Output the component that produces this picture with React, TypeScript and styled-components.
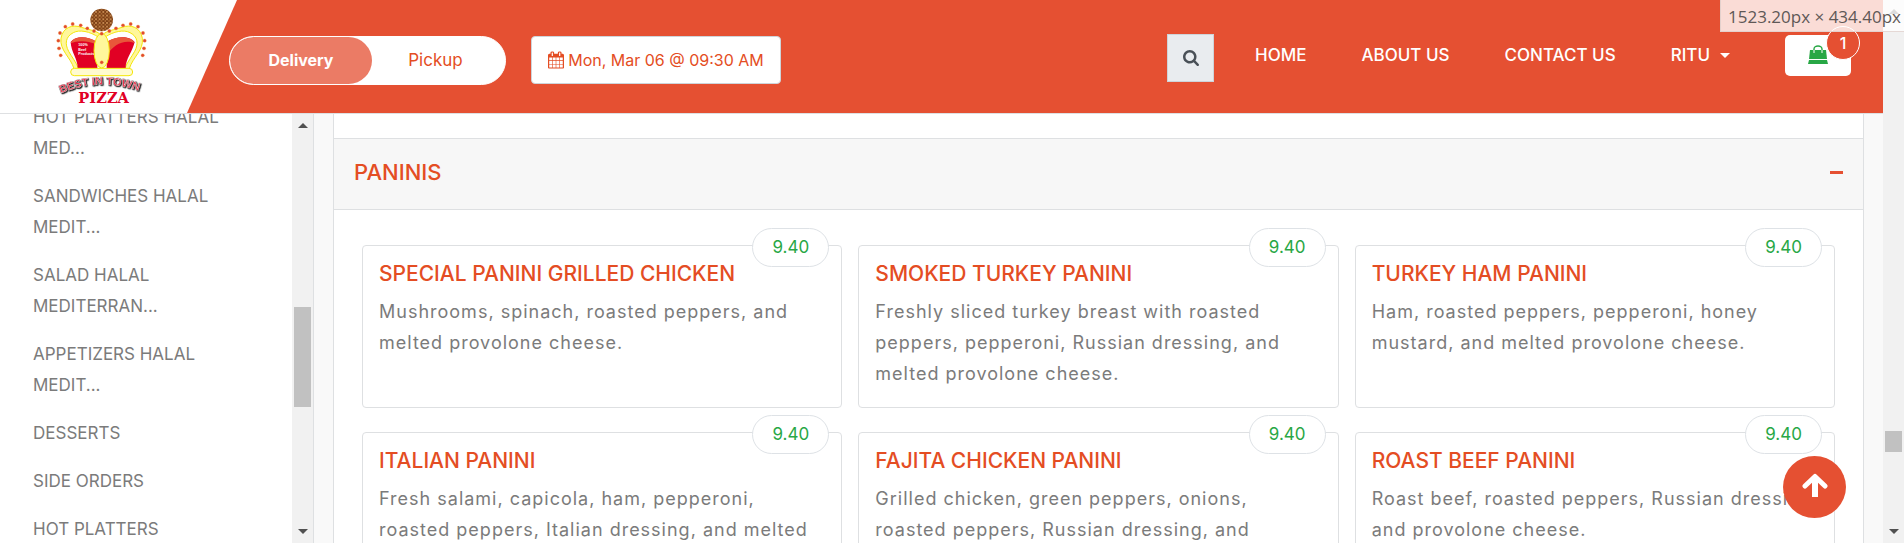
import React from "react";
import styled, { createGlobalStyle } from "styled-components";

const colors = {
  brand: "#e55032",
  brandText: "#e44d23",
  line: "#dee0e2",
  muted: "#7b7b7b",
  green: "#28a745",
};

const GlobalStyle = createGlobalStyle`
  *, *::before, *::after { box-sizing: border-box; }
  body {
    margin: 0;
    font-family: Inter, "Liberation Sans", sans-serif;
    color: ${colors.muted};
    background: #f9f9f9;
  }
  button { font-family: inherit; cursor: pointer; }
  h2, h3, p, ul { margin: 0; padding: 0; }
  a { color: inherit; text-decoration: none; }
`;

const Window = styled.div`
  position: relative;
  display: flex;
  height: 100vh;
  overflow: hidden;
`;

const Page = styled.div`
  flex: 1;
  min-width: 0;
  display: flex;
  flex-direction: column;
`;

const Header = styled.header`
  flex: none;
  display: flex;
  height: 114px;
  background: #fff;
  border-bottom: 1px solid ${colors.line};
`;

const LogoLink = styled.a`
  flex: none;
  width: 187px;
  padding-left: 40px;
`;

const HeaderBar = styled.div`
  flex: 1;
  display: flex;
  align-items: flex-start;
  justify-content: space-between;
  height: 113px;
  padding: 34px 32px 0 42px;
  color: #fff;
  background: ${colors.brand};
  clip-path: polygon(50px 0, 100% 0, 100% 100%, 0 100%);
`;

const OrderOptions = styled.div`
  display: flex;
  gap: 25px;
  padding-top: 2px;
`;

const Toggle = styled.div`
  display: flex;
  width: 277px;
  height: 49px;
  border: 1px solid #fff;
  border-radius: 25px;
  background: #fff;
  overflow: hidden;
`;

const ToggleButton = styled.button<{ $active?: boolean }>`
  flex: ${(p) => (p.$active ? "0 0 142px" : "1")};
  padding: 0 6px 2px 0;
  border: 0;
  border-radius: 25px;
  font-size: ${(p) => (p.$active ? 16 : 17)}px;
  font-weight: ${(p) => (p.$active ? 700 : 400)};
  color: ${(p) => (p.$active ? "#fff" : colors.brandText)};
  background: ${(p) => (p.$active ? "#eb7b65" : "transparent")};
  ${(p) => p.$active && "padding-right: 0;"}
`;

const DateButton = styled.button`
  display: flex;
  align-items: center;
  justify-content: center;
  gap: 4px;
  width: 250px;
  height: 48px;
  padding: 0;
  border: 1px solid #ced4da;
  border-radius: 4px;
  font-size: 16px;
  color: ${colors.brandText};
  background: #fff;
`;

const NavGroup = styled.div`
  display: flex;
  align-items: flex-start;
`;

const SearchButton = styled.button`
  display: flex;
  align-items: center;
  justify-content: center;
  width: 47px;
  height: 48px;
  margin-right: 41px;
  padding: 0;
  border: 1px solid #ced4da;
  color: #495057;
  background: #e9ecef;
`;

const Nav = styled.nav`
  display: flex;
  gap: 55px;
  margin-right: 55px;
  font-size: 17px;
  font-weight: 500;
  line-height: 42px;
`;

const NavLink = styled.a`
  display: flex;
  align-items: center;
  gap: 10px;
`;

const Caret = styled.span`
  border: 5px solid transparent;
  border-top-color: currentColor;
  border-bottom-width: 0;
`;

const CartButton = styled.button`
  position: relative;
  display: flex;
  align-items: center;
  justify-content: center;
  width: 66px;
  height: 41px;
  margin-top: 1px;
  padding: 0 0 2px;
  border: 0;
  border-radius: 5px;
  color: ${colors.green};
  background: #fff;
`;

const CartCount = styled.span`
  position: absolute;
  top: -9px;
  right: -9px;
  width: 34px;
  height: 34px;
  border: 1px solid #fff;
  border-radius: 50%;
  font-size: 16px;
  font-weight: 500;
  line-height: 32px;
  color: #fff;
  background: ${colors.brand};
`;

const Body = styled.div`
  flex: 1;
  min-height: 0;
  display: flex;
`;

const Sidebar = styled.aside`
  flex: none;
  display: flex;
  width: 314px;
  overflow: hidden;
  background: #fff;
  border-right: 1px solid ${colors.line};
`;

const CategoryList = styled.ul`
  flex: 1;
  display: flex;
  flex-direction: column;
  gap: 17px;
  margin-top: -12px;
  padding-left: 33px;
  list-style: none;
`;

const CategoryLink = styled.a`
  display: block;
  width: 200px;
  font-size: 17px;
  line-height: 31px;
  white-space: pre-line;
`;

const Track = styled.div`
  flex: none;
  display: flex;
  flex-direction: column;
  align-items: center;
  justify-content: space-between;
  width: 21px;
  padding: 9px 0;
  background: #f1f1f1;
`;

const Arrow = styled.span<{ $down?: boolean }>`
  border: 5px solid transparent;
  ${(p) => (p.$down ? "border-top-color: #505050; border-bottom-width: 0;" : "border-bottom-color: #505050; border-top-width: 0;")}
`;

const ThumbRail = styled.div<{ $before: number; $after: number }>`
  flex: 1;
  display: flex;
  flex-direction: column;
  &::before { content: ""; flex: ${(p) => p.$before}; }
  &::after { content: ""; flex: ${(p) => p.$after}; }
`;

const Thumb = styled.span<{ $share: number }>`
  flex: ${(p) => p.$share};
  width: 17px;
  background: #c1c1c1;
`;

const Menu = styled.main`
  flex: 1;
  min-width: 0;
  margin: 0 19px;
  padding-top: 24px;
  background: #fff;
  border: solid ${colors.line};
  border-width: 0 1px;
  overflow: hidden;
`;

const SectionHeader = styled.h2`
  border: solid ${colors.line};
  border-width: 1px 0;
  background: #f7f7f7;
`;

const SectionToggle = styled.button`
  display: flex;
  align-items: center;
  justify-content: space-between;
  width: 100%;
  height: 70px;
  padding: 0 20px 4px;
  border: 0;
  font-size: 22px;
  font-weight: 500;
  color: ${colors.brandText};
  background: transparent;
`;

const Minus = styled.span`
  width: 13px;
  height: 3px;
  background: ${colors.brand};
`;

const CardGrid = styled.div`
  display: grid;
  grid-template-columns: repeat(3, minmax(0, 1fr));
  gap: 24px 16px;
  padding: 35px 28px;
`;

const Card = styled.article`
  position: relative;
  padding: 12px 16px 18px;
  border: 1px solid ${colors.line};
  border-radius: 4px;
`;

const CardTitle = styled.h3`
  margin-bottom: 6px;
  font-size: 21px;
  font-weight: 500;
  line-height: 32px;
  color: ${colors.brandText};
`;

const CardText = styled.p`
  font-size: 18px;
  line-height: 31px;
  letter-spacing: 1px;
  white-space: pre-line;
`;

const Price = styled.span`
  position: absolute;
  top: -18px;
  right: 12px;
  width: 77px;
  height: 39px;
  border: 1px solid #dee2e6;
  border-radius: 20px;
  font-size: 17px;
  line-height: 36px;
  text-align: center;
  color: ${colors.green};
  background: #fff;
`;

const ToTop = styled.button`
  position: absolute;
  right: 58px;
  bottom: 25px;
  display: flex;
  align-items: center;
  justify-content: center;
  width: 63px;
  height: 62px;
  padding: 0 0 5px;
  border: 0;
  border-radius: 50%;
  color: #fff;
  background: ${colors.brand};
`;

const SizeHint = styled.div`
  position: absolute;
  top: 0;
  right: 0;
  width: 184px;
  height: 32px;
  padding-left: 7px;
  border: solid rgba(222, 206, 202, 0.8);
  border-width: 0 0 1px 1px;
  font-family: "Open Sans", "Noto Sans", sans-serif;
  font-size: 17px;
  line-height: 33px;
  white-space: nowrap;
  color: #5f5856;
  background: rgba(255, 255, 255, 0.8);
`;

const LogoArch = styled.text`
  font: 700 33px "Liberation Sans", sans-serif;
  fill: #e9324a;
  stroke: #fff;
  stroke-width: 1px;
  filter: drop-shadow(2px 2px 0 #222) drop-shadow(1px 1px 0 #222);
`;

const CalendarIcon = () => (
  <svg width="16" height="18" viewBox="64 0 1664 1792" fill="currentColor" aria-hidden="true">
    <path d="M192 1664h288v-288h-288v288zm352 0h320v-288h-320v288zm-352-352h288v-320h-288v320zm352 0h320v-320h-320v320zm-352-384h288v-288h-288v288zm736 736h320v-288h-320v288zm-384-736h320v-288h-320v288zm768 736h288v-288h-288v288zm-384-352h320v-320h-320v320zm-352-864v-288q0-13-9.5-22.5t-22.5-9.5h-64q-13 0-22.5 9.5t-9.5 22.5v288q0 13 9.5 22.5t22.5 9.5h64q13 0 22.5-9.5t9.5-22.5zm736 864h288v-320h-288v320zm-384-384h320v-288h-320v288zm384 0h288v-288h-288v288zm32-480v-288q0-13-9.5-22.5t-22.5-9.5h-64q-13 0-22.5 9.5t-9.5 22.5v288q0 13 9.5 22.5t22.5 9.5h64q13 0 22.5-9.5t9.5-22.5zm384-64v1280q0 52-38 90t-90 38h-1408q-52 0-90-38t-38-90v-1280q0-52 38-90t90-38h128v-96q0-66 47-113t113-47h64q66 0 113 47t47 113v96h384v-96q0-66 47-113t113-47h64q66 0 113 47t47 113v96h128q52 0 90 38t38 90z" />
  </svg>
);

const SearchIcon = () => (
  <svg width="16" height="16" viewBox="64 128 1664 1664" fill="currentColor" aria-hidden="true">
    <path d="M1216 832q0-185-131.5-316.5t-316.5-131.5-316.5 131.5-131.5 316.5 131.5 316.5 316.5 131.5 316.5-131.5 131.5-316.5zm512 832q0 52-38 90t-90 38q-54 0-90-38l-343-342q-179 124-399 124-143 0-273.5-55.5t-225-150-150-225-55.5-273.5 55.5-273.5 150-225 225-150 273.5-55.5 273.5 55.5 225 150 150 225 55.5 273.5q0 220-124 399l343 343q37 37 37 90z" />
  </svg>
);

const BagIcon = () => (
  <svg width="20" height="19" viewBox="0 0 20 19" fill="currentColor" aria-hidden="true">
    <path d="M2 5h16l1 9H1z" />
    <path d="M1 15h18l1 4H0z" />
    <path d="M6 8V4a4 3 0 0 1 8 0v4" fill="none" stroke="currentColor" strokeWidth="1.4" />
    <path d="M6 8V5M14 8V5" stroke="#fff" strokeWidth="1" />
  </svg>
);

const UpIcon = () => (
  <svg width="26" height="24" viewBox="0 0 26 24" fill="none" stroke="currentColor" aria-hidden="true">
    <path d="M3 13 13 3.5 23 13" strokeWidth="5" strokeLinecap="round" strokeLinejoin="round" />
    <path d="M13 4v20" strokeWidth="6" />
  </svg>
);

const crownStuds = [
  [62, 166], [57, 145], [55, 122], [60, 99], [76, 80], [98, 72], [122, 76], [142, 85], [162, 93], [185, 101],
  [208, 93], [228, 85], [249, 76], [272, 72], [294, 80], [309, 99], [314, 122], [312, 145], [308, 166], [185, 187],
];

const Logo = () => (
  <svg width="120" height="112" viewBox="0 0 360 336" role="img" aria-label="Best in Town Pizza">
    <defs>
      <pattern id="crust" width="11" height="11" patternUnits="userSpaceOnUse">
        <rect width="11" height="11" fill="#7a3d14" />
        <circle cx="3" cy="3" r="3" fill="#d2965a" />
        <circle cx="9" cy="8" r="2.4" fill="#bd7b3e" />
      </pattern>
      <path id="arch" d="M62 280Q185 228 316 280" />
    </defs>
    <circle cx="185" cy="60" r="34" fill="url(#crust)" />
    <g fill="#fff79b" stroke="#f4e60a" strokeWidth="3">
      <path d="M102 206C92 172 58 150 63 115 68 82 98 72 124 82c26 8 45 10 58 22l-6 8c-26-18-58-24-76-14-24 12-26 34-14 56 10 18 22 32 30 52z" />
      <path d="M268 206c10-34 44-56 39-91-5-33-35-43-61-33-26 8-45 10-58 22l6 8c26-18 58-24 76-14 24 12 26 34 14 56-10 18-22 32-30 52z" />
    </g>
    <path d="M113 204c0-28-20-48-21-78 12-18 48-20 80 0v78z" fill="#e10024" />
    <path d="M257 204c0-28 20-48 27-78-12-18-54-20-84 0v78z" fill="#e10024" />
    <path d="M92 130c6-20 44-26 76-6v8c-24-10-56-12-76-2zM284 130c-6-20-50-26-80-6v38c14-26 50-46 80-32z" fill="#e8573a" />
    <ellipse cx="185" cy="152" rx="23" ry="52" fill="#fff79b" stroke="#f4e60a" strokeWidth="3" />
    <rect x="92" y="205" width="186" height="22" rx="11" fill="#fffbd0" stroke="#f4e60a" strokeWidth="3" />
    {crownStuds.map(([x, y]) => (
      <circle key={`${x}-${y}`} cx={x} cy={y} r="5" fill="#e2492f" stroke="#f2a23c" strokeWidth="1" />
    ))}
    <g fill="#fff" fontFamily="Liberation Sans, sans-serif" fontSize="11" fontWeight="700">
      <text x="115" y="138">100%</text>
      <text x="115" y="152">Beef</text>
      <text x="115" y="166">Products</text>
    </g>
    <LogoArch>
      <textPath href="#arch">BEST IN TOWN</textPath>
    </LogoArch>
    <text x="191" y="308" textAnchor="middle" fill="#e10024" fontFamily="DejaVu Serif, serif" fontSize="44" fontWeight="700">
      PIZZA
    </text>
  </svg>
);

const categories = [
  "HOT PLATTERS HALAL\nMED...",
  "SANDWICHES HALAL\nMEDIT...",
  "SALAD HALAL\nMEDITERRAN...",
  "APPETIZERS HALAL\nMEDIT...",
  "DESSERTS",
  "SIDE ORDERS",
  "HOT PLATTERS",
];

const paninis = [
  { name: "SPECIAL PANINI GRILLED CHICKEN", text: "Mushrooms, spinach, roasted peppers, and\nmelted provolone cheese." },
  { name: "SMOKED TURKEY PANINI", text: "Freshly sliced turkey breast with roasted\npeppers, pepperoni, Russian dressing, and\nmelted provolone cheese." },
  { name: "TURKEY HAM PANINI", text: "Ham, roasted peppers, pepperoni, honey\nmustard, and melted provolone cheese." },
  { name: "ITALIAN PANINI", text: "Fresh salami, capicola, ham, pepperoni,\nroasted peppers, Italian dressing, and melted" },
  { name: "FAJITA CHICKEN PANINI", text: "Grilled chicken, green peppers, onions,\nroasted peppers, Russian dressing, and" },
  { name: "ROAST BEEF PANINI", text: "Roast beef, roasted peppers, Russian dressing,\nand provolone cheese." },
];

type ScrollbarProps = { before: number; thumb: number; after: number };

const Scrollbar = ({ before, thumb, after }: ScrollbarProps) => (
  <Track aria-hidden="true">
    <Arrow />
    <ThumbRail $before={before} $after={after}>
      <Thumb $share={thumb} />
    </ThumbRail>
    <Arrow $down />
  </Track>
);

export default function App() {
  return (
    <Window>
      <GlobalStyle />
      <Page>
        <Header>
          <LogoLink href="#home">
            <Logo />
          </LogoLink>
          <HeaderBar>
            <OrderOptions>
              <Toggle role="group" aria-label="Order type">
                <ToggleButton type="button" $active aria-pressed="true">Delivery</ToggleButton>
                <ToggleButton type="button" aria-pressed="false">Pickup</ToggleButton>
              </Toggle>
              <DateButton type="button">
                <CalendarIcon />
                Mon, Mar 06 @ 09:30 AM
              </DateButton>
            </OrderOptions>
            <NavGroup>
              <SearchButton type="button" aria-label="Search">
                <SearchIcon />
              </SearchButton>
              <Nav>
                <NavLink href="#home">HOME</NavLink>
                <NavLink href="#about">ABOUT US</NavLink>
                <NavLink href="#contact">CONTACT US</NavLink>
                <NavLink href="#account">
                  RITU
                  <Caret />
                </NavLink>
              </Nav>
              <CartButton type="button" aria-label="Cart">
                <BagIcon />
                <CartCount>1</CartCount>
              </CartButton>
            </NavGroup>
          </HeaderBar>
        </Header>
        <Body>
          <Sidebar>
            <CategoryList>
              {categories.map((name) => (
                <li key={name}>
                  <CategoryLink href="#menu">{name}</CategoryLink>
                </li>
              ))}
            </CategoryList>
            <Scrollbar before={179} thumb={100} after={122} />
          </Sidebar>
          <Menu>
            <SectionHeader>
              <SectionToggle type="button" aria-expanded="true">
                PANINIS
                <Minus />
              </SectionToggle>
            </SectionHeader>
            <CardGrid>
              {paninis.map((item) => (
                <Card key={item.name}>
                  <Price>9.40</Price>
                  <CardTitle>{item.name}</CardTitle>
                  <CardText>{item.text}</CardText>
                </Card>
              ))}
            </CardGrid>
          </Menu>
        </Body>
      </Page>
      <Scrollbar before={417} thumb={21} after={77} />
      <ToTop type="button" aria-label="Back to top">
        <UpIcon />
      </ToTop>
      <SizeHint>1523.20px × 434.40px</SizeHint>
    </Window>
  );
}
